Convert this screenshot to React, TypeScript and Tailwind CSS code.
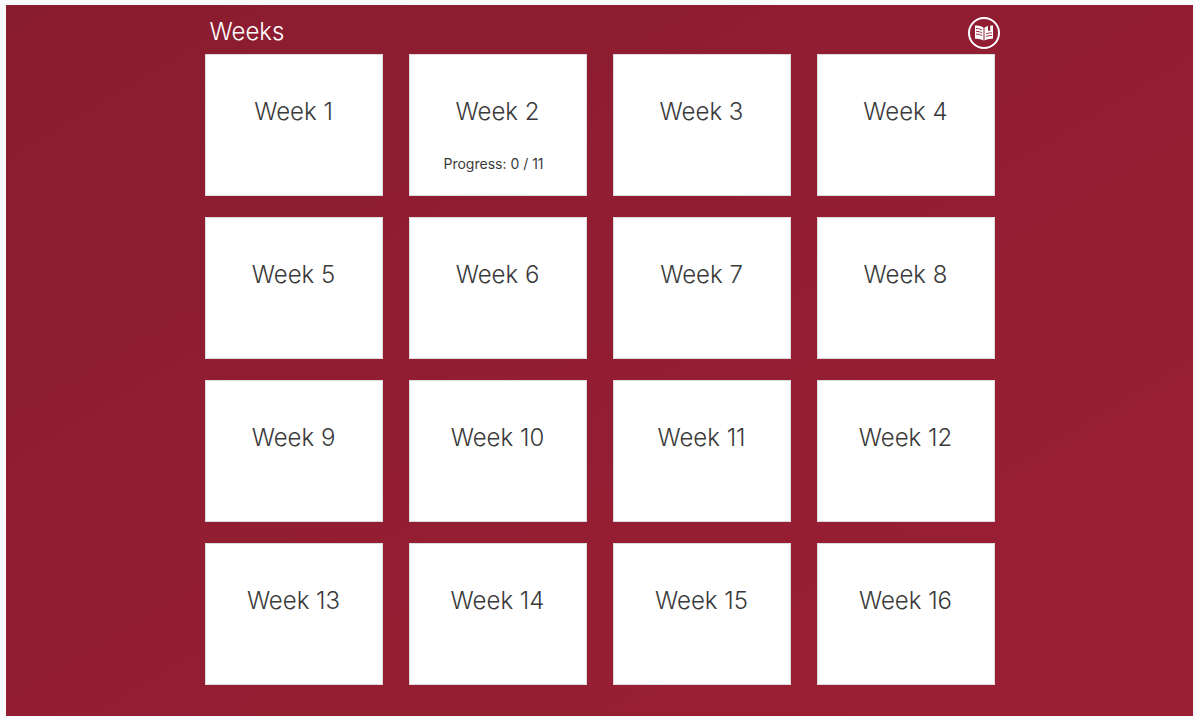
const weeks = Array.from({ length: 16 }, (_, i) => ({
  number: i + 1,
  progress: i === 1 ? "Progress: 0 / 11" : "",
}));

function BookIcon() {
  return (
    <svg viewBox="0 0 20 20" className="size-5" aria-hidden="true">
      <path d="M1 2.500Q6 2 9.500 4.500V17.500Q6 15.300 1 15.800zM10.500 4.500Q14 2 19 2.500v13.300q-5-.5-8.500 1.700z" fill="#fff" />
      <path d="M2 5.500q3.500 0 6 1.500M2 8.300q3.500 0 6 1.500M2 11q3.500 0 6 1.500M12 10.800Q15 9.800 18 9.800M12 13.400q3-1 6-1" fill="none" stroke="#8f1e32" strokeWidth=".9" />
      <path d="M14 2h2.200v6.200l-1.100-1-1.100 1z" fill="#8f1e32" />
    </svg>
  );
}

export default function App() {
  return (
    <div className="min-h-screen bg-[#f9fafc] pt-[5px] pr-[2px] pb-1 pl-1.5 font-['Inter',sans-serif]">
      <main className="bg-linear-to-br from-[#8a1c30] to-[#9b1f34] pb-[31px]">
        <div className="mx-auto max-w-[790px]">
          <header className="flex h-[49px] items-center justify-between pt-1 pl-[5px]">
            <h1 className="text-[24px] leading-8 font-light text-white">Weeks</h1>
            <button type="button" aria-label="Open book" className="mt-0.5 -mr-[5px] flex size-8 items-center justify-center rounded-full border-2 border-white">
              <BookIcon />
            </button>
          </header>
          <ul className="grid grid-cols-4 gap-x-[26px] gap-y-[21px]">
            {weeks.map((week) => (
              <li key={week.number}>
                <a href={`#week-${week.number}`} className="flex h-[142px] flex-col items-center border border-[#ddd] bg-white pt-[41px] text-[#3a3a3a]">
                  <h2 className="text-[24px] leading-8 font-light">Week {week.number}</h2>
                  {week.progress && <p className="mt-[26px] pr-2 text-[14px] leading-5">{week.progress}</p>}
                </a>
              </li>
            ))}
          </ul>
        </div>
      </main>
    </div>
  );
}
